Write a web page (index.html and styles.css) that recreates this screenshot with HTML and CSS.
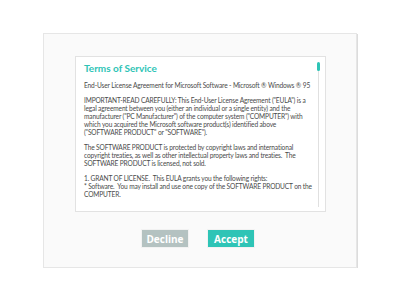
FILE: index.html
```html
<!DOCTYPE html>
<html lang="en">
<head>
  <meta charset="UTF-8">
  <title>Terms of Service</title>
  <link rel="stylesheet" href="styles.css">
</head>
<body>
  <div class="card">
    <div class="terms">
      <div class="terms-body">
        <h2>Terms of Service</h2>
        <p>End-User License Agreement for Microsoft Software - Microsoft ® Windows ® 95</p>
        <p>IMPORTANT-READ CAREFULLY: This End-User License Agreement ("EULA") is a<br>
        legal agreement between you (either an individual or a single entity) and the<br>
        manufacturer ("PC Manufacturer") of the computer system ("COMPUTER") with<br>
        which you acquired the Microsoft software product(s) identified above<br>
        ("SOFTWARE PRODUCT" or "SOFTWARE").</p>
        <p>The SOFTWARE PRODUCT is protected by copyright laws and international<br>
        copyright treaties, as well as other intellectual property laws and treaties.&nbsp; The<br>
        SOFTWARE PRODUCT is licensed, not sold.</p>
        <p>1. GRANT OF LICENSE.&nbsp; This EULA grants you the following rights:<br>
        * Software.&nbsp; You may install and use one copy of the SOFTWARE PRODUCT on the<br>
        COMPUTER.</p>
      </div>
      <div class="scroll-track">
        <div class="scroll-thumb"></div>
      </div>
    </div>

    <div class="actions">
      <button class="btn btn-decline">Decline</button>
      <button class="btn btn-accept">Accept</button>
    </div>
  </div>
</body>
</html>
```

FILE: styles.css
```css
body {
  margin: 0;
  background: #fff;
  font-family: 'Lato', sans-serif;
  color: #444;
}

.card {
  margin: 33px 0 0 43px;
  width: 251px;
  height: 211px;
  padding: 22px 30px 0 31px;
  background: #fafafa;
  border: 1px solid #e6e6e6;
  box-shadow: 1px 1px 0 #dcdcdc;
}

.terms {
  display: flex;
  height: 154px;
  background: #fff;
  border: 1px solid #e2e2e2;
}

.terms-body {
  flex: 1;
  padding: 5px 0 0 8px;
  overflow: hidden;
}

.terms-body h2 {
  margin: 0 0 7px;
  font-family: 'Lato', sans-serif;
  font-size: 10px;
  font-weight: 700;
  line-height: 12px;
  color: #2ec4b6;
}

.terms-body p {
  margin: 0 0 6.4px;
  font-size: 6.6px;
  line-height: 8.2px;
  letter-spacing: -0.15px;
  white-space: nowrap;
  color: #4a4a4a;
}

.scroll-track {
  position: relative;
  width: 1px;
  margin: 7px 6px 4px 0;
  background: #e0e0e0;
}

.scroll-thumb {
  position: absolute;
  top: -2px;
  left: -1px;
  width: 3px;
  height: 9px;
  border-radius: 2px;
  background: #2ec4b6;
}

.actions {
  display: flex;
  justify-content: center;
  gap: 18px;
  margin-top: 17px;
  padding-right: 5px;
}

.btn {
  width: 48px;
  height: 19px;
  padding: 0;
  border: 1px solid #f2f2f2;
  font-family: 'Open Sans', sans-serif;
  font-size: 10px;
  font-weight: 700;
  color: #fff;
  cursor: pointer;
}

.btn-decline {
  background: #b4c2c1;
}

.btn-accept {
  background: #2ec4b6;
}
```
